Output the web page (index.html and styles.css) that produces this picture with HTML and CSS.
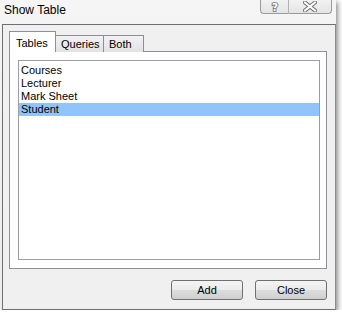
FILE: index.html
```html
<!DOCTYPE html>
<html lang="en">
<head>
  <meta charset="UTF-8" />
  <title>Show Table</title>
  <link rel="stylesheet" href="styles.css">
</head>
<body>

  <div class="window">
    <div class="titlebar">
      <span class="title">Show Table</span>
      <div class="caption-buttons">
        <div class="cap-btn help">
          <svg width="12" height="13" viewBox="0 0 12 13">
            <text x="6" y="11" text-anchor="middle" class="help-glyph">?</text>
          </svg>
        </div>
        <div class="cap-btn close">
          <svg width="14" height="11" viewBox="0 0 14 11">
            <path d="M2 1.5 L12 9.5 M12 1.5 L2 9.5" stroke="#6d6d6d" stroke-width="4" stroke-linecap="square" fill="none"/>
            <path d="M2 1.5 L12 9.5 M12 1.5 L2 9.5" stroke="#ffffff" stroke-width="2" stroke-linecap="square" fill="none"/>
          </svg>
        </div>
      </div>
    </div>

    <div class="client">
      <div class="tabs">
        <div class="tab active">Tables</div>
        <div class="tab">Queries</div>
        <div class="tab">Both</div>
      </div>

      <div class="panel">
        <div class="listbox">
          <div class="item">Courses</div>
          <div class="item">Lecturer</div>
          <div class="item">Mark Sheet</div>
          <div class="item selected">Student</div>
        </div>
      </div>

      <div class="actions">
        <button class="btn">Add</button>
        <button class="btn">Close</button>
      </div>
    </div>
  </div>

</body>
</html>
```

FILE: styles.css
```css
body {
  margin: 0;
  background: #ffffff;
  font-family: 'Liberation Sans', Arial, sans-serif;
  font-size: 11px;
  color: #000;
}

.window {
  width: 336px;
  height: 310px;
  box-sizing: border-box;
  padding-left: 2px;
  display: flex;
  flex-direction: column;
  background: linear-gradient(#f5f5f5, #ececec);
  box-shadow: 2px 2px 5px rgba(0, 0, 0, 0.45);
}

.titlebar {
  height: 24px;
  display: flex;
  align-items: flex-start;
  flex-shrink: 0;
}

.title {
  font-size: 12px;
  line-height: 20px;
  padding-left: 2px;
}

.caption-buttons {
  margin-left: auto;
  margin-right: 4px;
  display: flex;
}

.cap-btn {
  height: 14px;
  box-sizing: border-box;
  border: 1px solid #9a9a9a;
  border-top: none;
  background: linear-gradient(#f2f2f2, #e4e4e4);
  display: flex;
  align-items: center;
  justify-content: center;
}

.cap-btn.help {
  width: 29px;
  border-right: 1px solid #b0b0b0;
  border-bottom-left-radius: 4px;
}

.cap-btn.close {
  width: 43px;
  border-left: none;
  border-bottom-right-radius: 4px;
}

.help-glyph {
  font-family: 'DejaVu Sans', sans-serif;
  font-weight: bold;
  font-size: 11px;
  fill: #ffffff;
  stroke: #6d6d6d;
  stroke-width: 1.6px;
  paint-order: stroke fill;
}

.client {
  flex: 1;
  border: 1px solid #6f6f6f;
  border-right-color: #8a8a8a;
  background: #f0f0f0;
  padding: 7px 8px 0 6px;
  display: flex;
  flex-direction: column;
}

.tabs {
  display: flex;
  align-items: flex-end;
  height: 20px;
  margin-bottom: -1px;
  position: relative;
  z-index: 1;
}

.tab {
  height: 17px;
  box-sizing: border-box;
  border: 1px solid #8c8e94;
  border-bottom: none;
  border-left: none;
  background: linear-gradient(#f2f2f2, #e2e2e2);
  line-height: 17px;
  padding: 0 5px;
}

.tab:nth-child(2) {
  width: 48px;
}

.tab:nth-child(3) {
  width: 40px;
}

.tab.active {
  width: 47px;
  height: 21px;
  border-left: 1px solid #8c8e94;
  background: #ffffff;
  line-height: 22px;
  padding: 0 6px;
}

.panel {
  height: 218px;
  box-sizing: border-box;
  border: 1px solid #8c8e94;
  background: #ffffff;
  padding: 8px 6px 8px 8px;
}

.listbox {
  height: 100%;
  box-sizing: border-box;
  border: 1px solid #9a9da3;
  padding-top: 3px;
}

.item {
  height: 13px;
  line-height: 13px;
  padding-left: 2px;
}

.item.selected {
  background: #90c4fa;
}

.actions {
  display: flex;
  justify-content: flex-end;
  gap: 12px;
  margin-top: 11px;
}

.btn {
  width: 72px;
  height: 20px;
  border: 1px solid #707070;
  border-radius: 3px;
  background: linear-gradient(#f4f4f4 0%, #ebebeb 50%, #dddddd 51%, #cfcfcf 100%);
  font-family: 'Liberation Sans', Arial, sans-serif;
  font-size: 11px;
  color: #000;
  padding: 0;
}
```
